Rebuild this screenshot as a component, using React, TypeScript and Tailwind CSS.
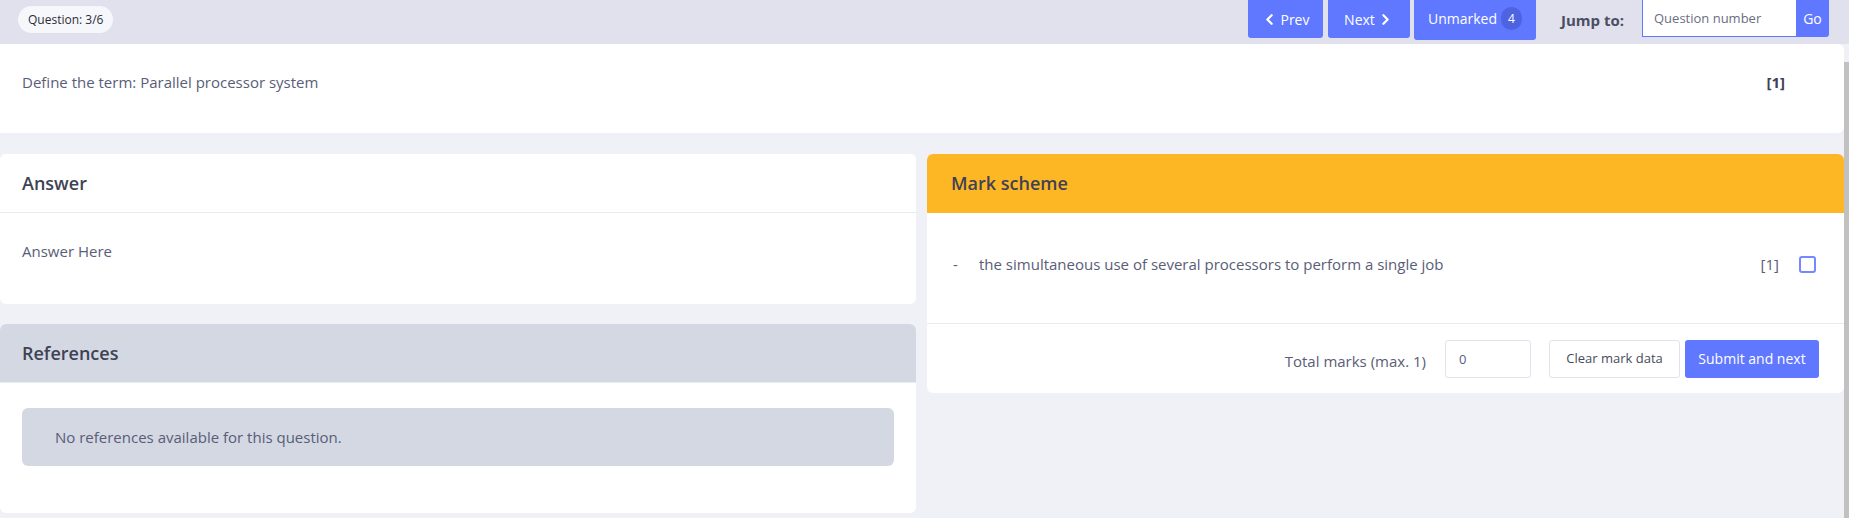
import React from 'react';
import { ChevronLeft, ChevronRight } from 'lucide-react';

const Card: React.FC<{ title: string; head?: string; children: React.ReactNode; className?: string }> = ({
  title,
  head = 'bg-white',
  children,
  className = '',
}) => (
  <div className={`bg-white rounded-md overflow-hidden ${className}`}>
    <div className={`h-[59px] flex items-center px-[22px] border-b border-[#e9ebf2] ${head}`}>
      <h3 className="text-[18px] font-semibold text-[#3f4254]">{title}</h3>
    </div>
    {children}
  </div>
);

export default function App() {
  return (
    <div className="w-[1849px] h-[518px] overflow-hidden bg-[#f0f1f6] flex flex-col font-['Open_Sans',sans-serif] text-[#595d78]">
      {/* top bar */}
      <div className="h-[44px] shrink-0 bg-[#e1e1ee] flex items-start pl-[18px] pr-[20px]">
        <div className="mt-[6px] h-[27px] px-[10px] rounded-full bg-[#f6f7fa] flex items-center text-[12px] text-[#2b2d3a]">
          Question: 3/6
        </div>
        <div className="ml-auto flex items-start">
          <button className="h-[38px] w-[75px] rounded-b-[3px] bg-[#5f78ff] text-white text-[14px] flex items-center justify-center gap-[2px]">
            <ChevronLeft size={17} strokeWidth={3.2} />
            Prev
          </button>
          <button className="ml-[5px] h-[38px] w-[82px] rounded-b-[3px] bg-[#5f78ff] text-white text-[14px] flex items-center justify-center gap-[2px]">
            Next
            <ChevronRight size={17} strokeWidth={3.2} />
          </button>
          <button className="ml-[4px] h-[40px] w-[122px] rounded-b-[3px] bg-[#5f78ff] text-white text-[14px] flex items-center justify-center gap-[4px] pb-[3px]">
            Unmarked
            <span className="w-[21px] h-[23px] rounded-full bg-[#4d63df] text-[12px] flex items-center justify-center">4</span>
          </button>
          <span className="ml-[25px] mt-[9px] text-[15px] font-bold text-[#4b4e62]">Jump to:</span>
          <div className="ml-[18px] flex items-start">
            <input
              placeholder="Question number"
              className="h-[37px] w-[154px] bg-white border-l border-b border-[#5f78ff] px-[11px] text-[13px] outline-none placeholder:text-[#6b6e80]"
            />
            <button className="h-[37px] w-[33px] rounded-br-[3px] bg-[#5f78ff] text-white text-[14px]">Go</button>
          </div>
        </div>
      </div>

      <div className="flex-1 flex min-h-0">
        <div className="flex-1 flex flex-col gap-[21px]">
          {/* question */}
          <div className="h-[89px] bg-white rounded-r-md flex items-start justify-between pt-[27px] pl-[22px] pr-[59px] text-[15px]">
            <span>Define the term: Parallel processor system</span>
            <span className="font-bold text-[#3f4254]">[1]</span>
          </div>

          <div className="flex gap-[11px] items-start">
            {/* left column */}
            <div className="w-[916px] flex flex-col gap-[20px]">
              <Card title="Answer">
                <div className="h-[91px] px-[22px] pt-[27px] text-[15px]">Answer Here</div>
              </Card>
              <Card title="References" head="bg-[#d3d8e3]">
                <div className="px-[22px] pt-[25px] pb-[47px]">
                  <div className="h-[58px] rounded-md bg-[#d3d8e3] flex items-center px-[33px] text-[15px]">
                    No references available for this question.
                  </div>
                </div>
              </Card>
            </div>

            {/* right column */}
            <div className="flex-1">
              <Card title="Mark scheme" head="bg-[#feb724] border-b-0 px-[24px]">
                <div className="h-[111px] border-b border-[#e9ebf2] flex items-start pt-[40px] pl-[26px] pr-[28px] text-[15px]">
                  <span className="w-[26px]">-</span>
                  <span>the simultaneous use of several processors to perform a single job</span>
                  <span className="ml-auto">[1]</span>
                  <span className="ml-[20px] mt-[3px] w-[17px] h-[17px] rounded-[3px] border-2 border-[#7687ff] bg-white" />
                </div>
                <div className="h-[69px] flex items-center justify-end pr-[25px] text-[15px]">
                  <span className="mt-[6px]">Total marks (max. 1)</span>
                  <input
                    defaultValue="0"
                    className="ml-[19px] h-[38px] w-[86px] border border-[#e1e3ec] rounded-[3px] px-[13px] text-[13px] outline-none"
                  />
                  <button className="ml-[18px] h-[38px] w-[131px] border border-[#e1e3ec] rounded-[3px] text-[13px] text-[#474a5c] bg-white">
                    Clear mark data
                  </button>
                  <button className="ml-[5px] h-[38px] w-[134px] rounded-[3px] bg-[#5f78ff] text-white text-[14px]">
                    Submit and next
                  </button>
                </div>
              </Card>
            </div>
          </div>
        </div>
        {/* scrollbar */}
        <div className="w-[5px] shrink-0 pt-[18px]">
          <div className="h-full bg-[#c1c1c1]" />
        </div>
      </div>
    </div>
  );
}
